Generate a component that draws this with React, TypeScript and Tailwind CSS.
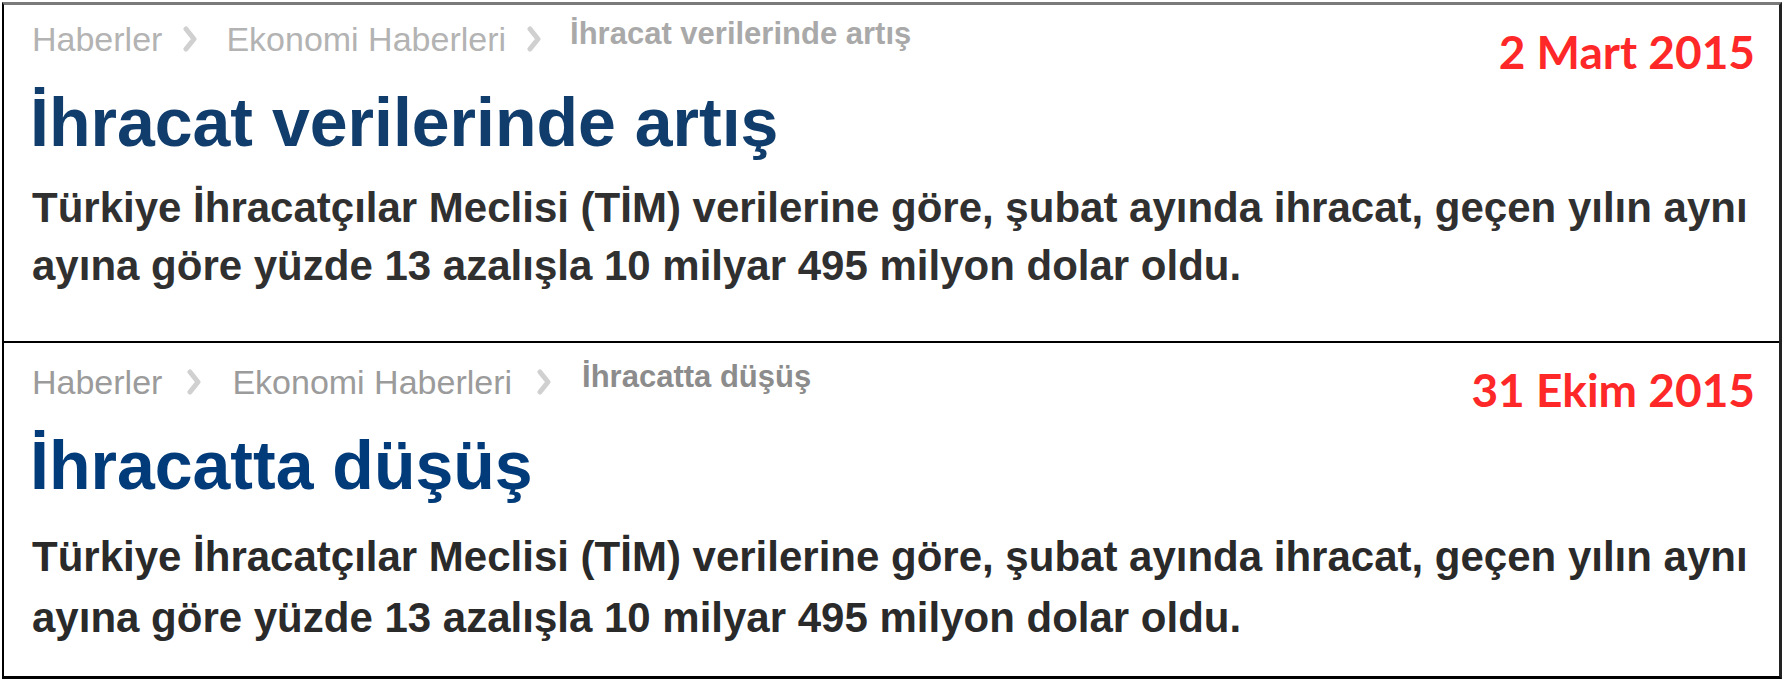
import React from "react";

interface Snapshot {
  date: string;
  current: string;
  title: string;
  lines: string[];
  tone: "faded" | "sharp";
}

const snapshots: Snapshot[] = [
  {
    date: "2 Mart 2015",
    current: "İhracat verilerinde artış",
    title: "İhracat verilerinde artış",
    lines: [
      "Türkiye İhracatçılar Meclisi (TİM) verilerine göre, şubat ayında ihracat, geçen yılın aynı",
      "ayına göre yüzde 13 azalışla 10 milyar 495 milyon dolar oldu.",
    ],
    tone: "faded",
  },
  {
    date: "31 Ekim 2015",
    current: "İhracatta düşüş",
    title: "İhracatta düşüş",
    lines: [
      "Türkiye İhracatçılar Meclisi (TİM) verilerine göre, şubat ayında ihracat, geçen yılın aynı",
      "ayına göre yüzde 13 azalışla 10 milyar 495 milyon dolar oldu.",
    ],
    tone: "sharp",
  },
];

// thick grey breadcrumb separator
const Chevron: React.FC<{ wide: boolean }> = ({ wide }) => (
  <svg
    width="16"
    height="26"
    viewBox="0 0 16 26"
    className={wide ? "ml-[24px] mr-[30px] shrink-0" : "ml-[20px] mr-[28px] shrink-0"}
  >
    <polyline points="4,3 12,13 4,23" fill="none" stroke="#d0d0d0" strokeWidth="5" strokeLinejoin="round" strokeLinecap="round" />
  </svg>
);

const NewsSnapshot: React.FC<{ item: Snapshot; first: boolean }> = ({ item, first }) => {
  const faded = item.tone === "faded";
  return (
    <section
      className={
        first
          ? "h-[338px] border-b-2 border-black pl-[28px] pr-[24px] pt-[14px]"
          : "flex-1 pl-[28px] pr-[24px] pt-[19px]"
      }
    >
      <div className="flex h-[40px] items-start justify-between">
        <div
          className={`flex items-start font-['Liberation_Sans',Arial,sans-serif] text-[34px] leading-[40px] ${
            faded ? "text-[#b3b3b3]" : "text-[#9b9b9b]"
          }`}
        >
          <span>Haberler</span>
          <span className="flex h-[40px] items-center">
            <Chevron wide={!first} />
          </span>
          <span>Ekonomi Haberleri</span>
          <span className="flex h-[40px] items-center">
            <Chevron wide={!first} />
          </span>
          <span
            className={`text-[31px] leading-[30px] font-bold ${
              faded ? "text-[#a9a9a9]" : "text-[#8c8c8c]"
            }`}
          >
            {item.current}
          </span>
        </div>
        <div
          className={`font-['Lato',sans-serif] text-[46px] font-bold leading-[56px] text-[#ff2828] ${
            first ? "mt-[5px]" : "mt-[0px]"
          }`}
        >
          {item.date}
        </div>
      </div>

      <h1
        className={`mt-[25px] -ml-[2px] font-['Liberation_Sans',Arial,sans-serif] text-[68px] font-bold leading-[76px] ${
          faded ? "text-[#103d6b]" : "text-[#023b79]"
        }`}
      >
        {item.title}
      </h1>

      <p
        className={`font-['Liberation_Sans',Arial,sans-serif] text-[42px] font-bold ${
          first ? "mt-[19px] leading-[58px] text-[#303030]" : "mt-[23px] leading-[61px] text-[#2a2a2a]"
        }`}
      >
        {item.lines.map((line) => (
          <span key={line} className="block whitespace-nowrap">
            {line}
          </span>
        ))}
      </p>
    </section>
  );
};

export default function App() {
  return (
    <div className="h-[680px] w-[1784px] bg-white pl-[2px] pt-[2px]">
      <div className="flex h-[677px] w-[1780px] flex-col border-t-[3px] border-r-[3px] border-b-[3px] border-l-2 border-t-[#7a7a7a] border-r-[#222222] border-b-black border-l-black">
        {snapshots.map((item, i) => (
          <NewsSnapshot key={item.date} item={item} first={i === 0} />
        ))}
      </div>
    </div>
  );
}
